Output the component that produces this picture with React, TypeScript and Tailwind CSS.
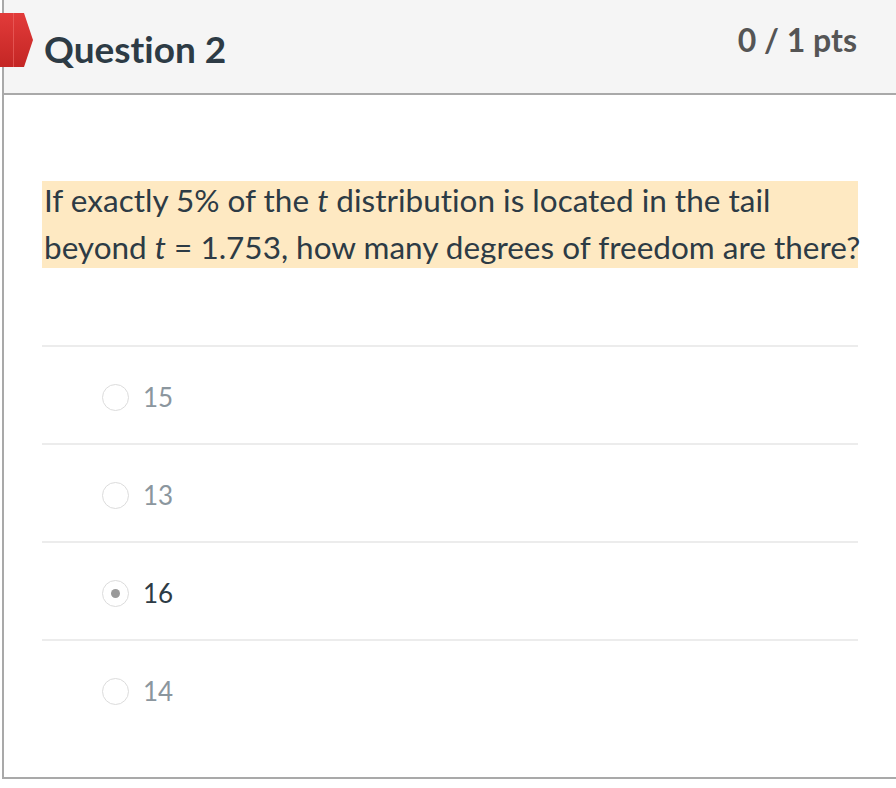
import React from 'react';

const answers = [
  { label: '15', selected: false },
  { label: '13', selected: false },
  { label: '16', selected: true },
  { label: '14', selected: false },
];

function Flag() {
  return (
    <svg className="absolute left-[-4px] top-[13px]" width="34" height="54" viewBox="0 0 34 54">
      <defs>
        <linearGradient id="flagFill" x1="0" y1="0" x2="0" y2="1">
          <stop offset="0" stopColor="#e23b3a" />
          <stop offset="1" stopColor="#c42624" />
        </linearGradient>
      </defs>
      <polygon points="0,0 24,0 33,27 24,54 0,54" fill="url(#flagFill)" />
      <line x1="13.5" y1="0" x2="13.5" y2="54" stroke="#ef6a68" strokeWidth="1" opacity="0.6" />
    </svg>
  );
}

function Radio({ selected }: { selected: boolean }) {
  return (
    <span className="flex h-[27px] w-[27px] items-center justify-center rounded-full border border-[#dcdcdc] bg-white">
      {selected && <span className="h-[9px] w-[9px] rounded-full bg-[#9a9a9a]" />}
    </span>
  );
}

export default function App() {
  return (
    <div
      className="h-[788px] w-[896px] overflow-hidden bg-white [font-variant-ligatures:none]"
      style={{ fontFamily: 'Lato, "Open Sans", sans-serif' }}
    >
      <div className="ml-[2px] h-[779px] w-[920px] border-b-2 border-l-2 border-[#a9a9a9]">
        <div className="relative flex h-[95px] items-start justify-between border-b-2 border-[#a9a9a9] bg-[#f5f5f5] pl-[40px] pr-[65px]">
          <Flag />
          <h2 className="mt-[27px] text-[37px] font-bold leading-[44px] text-[#2d3b45]">Question 2</h2>
          <div className="mt-[20px] text-[32px] font-bold leading-[40px] text-[#555555]">0 / 1 pts</div>
        </div>
        <div className="pl-[38px]">
          <div className="mt-[86px] h-[87px] w-[816px] bg-[#fee9c2] pl-[2px] text-[31.5px] leading-[47px] text-[#2d3b45]">
            <p className="relative -top-[4px] w-[830px]">
              If exactly 5% of the <i>t</i> distribution is located in the tail beyond <i>t</i> = 1.753, how many degrees of freedom are there?
            </p>
          </div>
          <div className="mt-[77px] w-[816px]">
            {answers.map((a) => (
              <div key={a.label} className="flex h-[98px] items-center gap-[14px] border-t-2 border-[#ececec] pl-[60px] pt-[4px]">
                <Radio selected={a.selected} />
                <span className={`text-[26px] leading-none ${a.selected ? 'text-[#2d3b45]' : 'text-[#8b969e]'}`}>{a.label}</span>
              </div>
            ))}
          </div>
        </div>
      </div>
    </div>
  );
}
